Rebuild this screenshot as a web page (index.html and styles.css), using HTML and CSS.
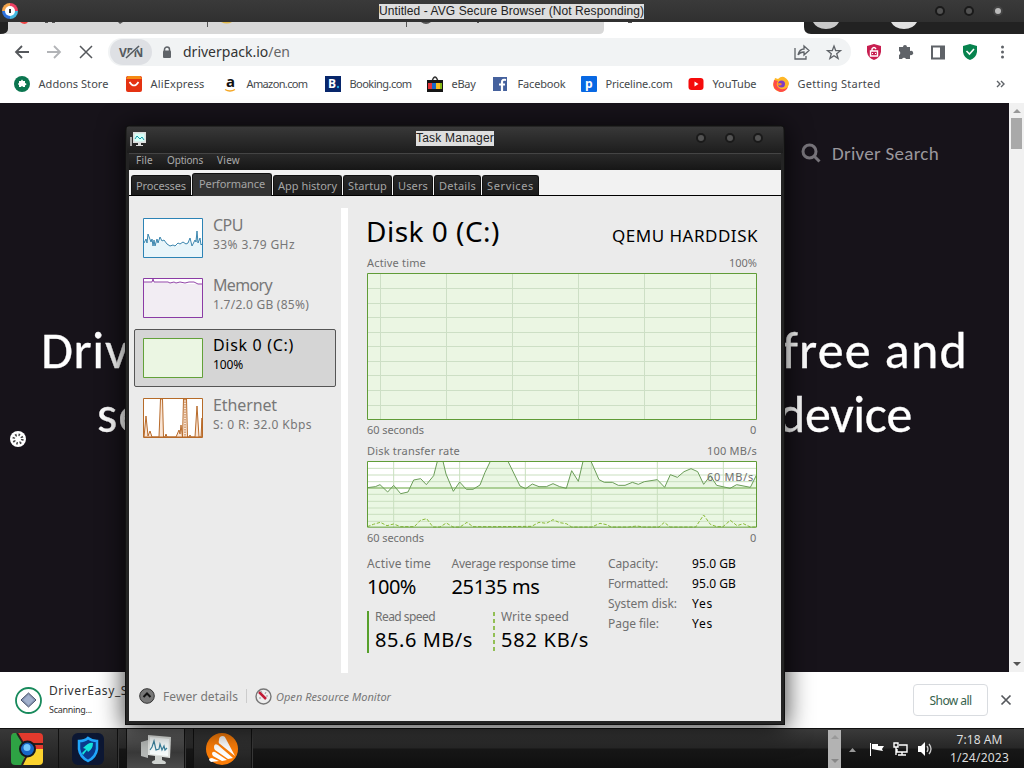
FILE: index.html
```html
<!DOCTYPE html>
<html lang="en">
<head>
<meta charset="utf-8">
<title>Desktop</title>
<link rel="stylesheet" href="styles.css">
</head>
<body>
<div class="desktop">
  <header class="titlebar">
    <svg class="browser-logo" viewBox="0 0 16 16"><path fill="#ef4164" d="M8 0a8 8 0 0 1 8 8H8z"/><path fill="#f5a54b" d="M8 0a8 8 0 0 0-8 8h8z"/><path fill="#2f72dc" d="M0 8a8 8 0 0 0 8 8V8z"/><path fill="#45b8e0" d="M16 8a8 8 0 0 1-8 8V8z"/><circle cx="8" cy="8" r="5" fill="#fff"/><path d="M7 6h2v4H7z" fill="#333"/></svg>
    <span class="caption" data-w="265">Untitled - AVG Secure Browser (Not Responding)</span>
    <div class="knobs wide"><i></i><i></i><i class="lit"></i></div>
  </header>

  <div class="tabstrip">
    <svg width="1024" height="12" viewBox="0 0 1024 12"><path fill="#fff" d="M0 0h1024v12H0z"/><path fill="#d8d8d8" d="M0 0h604v7q0 5-5 5H0z"/><path fill="#222" d="M0 0h8v7q0 5-8 5zM804 0h220v12H811q-7 0-7-7z"/><path fill="#e44" d="M20 0h8q-3 4-8 0z"/><path fill="#e0b94c" d="M221 0h11q-5 3-11 0z"/><path fill="#555" d="M45 0h3v1h-3zM52 0h3v1h-3zM118 0h5l-3 2zM207 0h1v5h-1zM406 0h1v5h-1zM421 0h10q-5 4-10 0zM477 0h2v1h-2zM628 0h4v1h-4z"/><path fill="#c9c9c9" d="M813 0h26a14 11 0 0 1-26 0z"/><path fill="#e1e1e1" d="M891 0h26a14 11 0 0 1-26 0z"/></svg>
  </div>

  <div class="toolbar">
    <svg class="nav" viewBox="0 0 100 34" width="100" height="34" fill="none" stroke-width="1.8"><path stroke="#55585c" d="M29 18H16m6-6-6 6 6 6"/><path stroke="#b2b4b7" d="M47 18h13m-6-6 6 6-6 6"/><path stroke="#55585c" stroke-width="1.5" d="m80 12 12 12m0-12L80 24"/></svg>
    <div class="address">
      <div class="vpn"><span data-w="24">VPN</span><svg viewBox="0 0 20 14" width="20" height="14"><path d="M4 13 16 1" stroke="#dee0e4" stroke-width="3.500"/><path d="M4 13 17 1" stroke="#555a60" stroke-width="1.600"/></svg></div>
      <svg class="lock" width="10" height="13" viewBox="0 0 10 13"><path d="M2.500 5V3.500a2.500 2.500 0 0 1 5 0V5" fill="none" stroke="#5f6368" stroke-width="1.500"/><rect x="1" y="4.500" width="8" height="7.500" rx="1" fill="#5f6368"/></svg>
      <span class="url" data-w="107">driverpack.io<em>/en</em></span>
      <svg class="actions" width="52" height="18" viewBox="0 0 52 18" fill="none" stroke="#5f6368" stroke-width="1.300"><path d="M2 5v11h11v-3M5 12c1-4 3-6 6-6V3l5 4.500-5 4.500V9q-4 0-6 3z"/><path d="m41 3 1.700 4.500 4.800.2-3.800 3 1.400 4.700L41 12.700l-4.100 2.700 1.400-4.700-3.800-3 4.800-.2z"/></svg>
    </div>
    <svg class="extensions" width="152" height="22" viewBox="0 0 152 22"><path fill="#c81e50" d="m14 3 7 2v6q-1 6-7 8-6-2-7-8V5z"/><path d="M10.500 10h7v5h-7zM12 10V8q2-3 4 0" fill="none" stroke="#fff" stroke-width="1.400"/><path d="M12 12.500h1m2 0h1" stroke="#fff"/><path fill="#5f6368" d="M39 6h4a2 2 0 0 1 4-.1V6h3v4a2 2 0 0 1 2 4l-2 .3V18h-4a2.200 2.200 0 0 0-4 0h-3v-4a2.200 2.200 0 0 0 0-4z"/><path fill="none" stroke="#5f6368" stroke-width="2" d="M72 5.500h12v12H72z"/><path fill="#5f6368" d="M80 5h5v13h-5z"/><path fill="#07834e" d="m110 3 7 2v6q-1 6-7 8-6-2-7-8V5z"/><path d="m106.500 10 3 3 4.500-5" fill="none" stroke="#fff" stroke-width="1.600"/><g fill="#5f6368"><circle cx="142.500" cy="6" r="1.500"/><circle cx="142.500" cy="11" r="1.500"/><circle cx="142.500" cy="16" r="1.500"/></g></svg>
  </div>

  <nav class="bookmarks">
    <a><svg viewBox="0 0 16 16"><circle cx="8" cy="8" r="8" fill="#0b7650"/><path fill="#fff" d="M5 5h2q1-3 2 0h2v2q3 1 0 2.500V11H9q-1-2-2 0H5V9Q3 8 5 7z"/></svg><span data-w="70">Addons Store</span></a>
    <a><svg viewBox="0 0 16 16"><rect width="16" height="16" rx="2" fill="#e43212"/><path fill="#f58a13" d="M2 0h12l2 3H0z"/><path d="M3.500 6q4.500 7 9 0" fill="none" stroke="#fff" stroke-width="1.600"/></svg><span data-w="54">AliExpress</span></a>
    <a><svg viewBox="0 0 16 16"><text x="4" y="11" class="amazon">a</text><path d="M3 13.500q5 3 10 0" fill="none" stroke="#f5a623" stroke-width="1.300"/></svg><span data-w="61">Amazon.com</span></a>
    <a><svg viewBox="0 0 16 16"><path fill="#07266b" d="M0 0h16v16H0z"/><text x="3" y="12" class="logo-letter">B</text><circle cx="13" cy="11" r="1.200" fill="#21a8e0"/></svg><span data-w="62">Booking.com</span></a>
    <a><svg viewBox="0 0 16 16"><path d="M5 5q3-8 6 0" fill="none" stroke="#333" stroke-width="1.300"/><path fill="#151515" d="M0 4h16v12H0z"/><path fill="#e53238" d="M1 7h4v6H1z"/><path fill="#1668c8" d="M5 7h4v6H5z"/><path fill="#f5bf20" d="M9 7h4v6H9z"/><path fill="#86b817" d="M13 7h2v6h-2z"/></svg><span data-w="24">eBay</span></a>
    <a><svg viewBox="0 0 16 16"><path fill="#45619d" d="M0 1h14v14H0z"/><path d="M9 15V6q0-3 4-2M6 8.500h6" fill="none" stroke="#fff" stroke-width="2.200"/></svg><span data-w="48">Facebook</span></a>
    <a><svg viewBox="0 0 16 16"><rect width="16" height="16" rx="1" fill="#0868e3"/><text x="4" y="11.500" class="logo-letter">p</text></svg><span data-w="67">Priceline.com</span></a>
    <a><svg viewBox="0 0 16 16"><rect y="2" x=".5" width="15" height="12" rx="3" fill="#f50b0b"/><path fill="#fff" d="m6.500 5.500 4 2.500-4 2.500z"/></svg><span data-w="44">YouTube</span></a>
    <a><svg viewBox="0 0 16 16"><path fill="#ffb727" d="M2 2l3 1q3-3 6-2 5 3 5 7-2 7-8 8-7-1-8-7z"/><path fill="#ff4a48" d="M1 4q-3 9 6 12 6 0 8-5-5 4-9 1-4-3-1-7z"/><circle cx="8.500" cy="8" r="3.500" fill="#803dc4"/><path d="M4 8q3-2 5 0-2 3-5 0" fill="#ff8a24"/></svg><span data-w="83">Getting Started</span></a>
    <svg class="more" viewBox="0 0 10 8" width="10" height="8"><path d="m1 1 3 3-3 3m4-6 3 3-3 3" fill="none" stroke="#5f6368" stroke-width="1.400"/></svg>
  </nav>

  <main class="page">
    <div class="hero">
      <div class="search"><svg width="20" height="20" viewBox="0 0 20 20" fill="none" stroke="#77747a" stroke-width="3"><circle cx="8.500" cy="8.500" r="6.500"/><path d="m13 13 5.500 5.500"/></svg><span data-w="107">Driver Search</span></div>
      <div class="headline"><span data-w="88">Driv</span><span data-w="186">free and</span></div>
      <div class="headline second"><span data-w="48">se</span><span data-w="134">device</span></div>
    </div>
    <div class="scrollbar"><i class="up"></i><b></b><i class="down"></i></div>
    <svg class="busy" width="16" height="16" viewBox="0 0 16 16"><circle cx="8" cy="8" r="8" fill="#fff"/><circle cx="8" cy="8" r="4.300" fill="none" stroke="#444" stroke-width="2.600" stroke-dasharray="1.500 1.877"/></svg>
  </main>

  <footer class="downloads">
    <svg width="27" height="27" viewBox="0 0 27 27"><circle cx="13.500" cy="13.500" r="12.500" fill="#fff" stroke="#188a5c" stroke-width="1.800"/><path d="m13.500 6 7.500 7-7.500 7L6 13z" fill="#8d9bb8" stroke="#46506a"/><path d="m13.500 8 5 5-5 5-5-5z" fill="#a3b1cd"/></svg>
    <div class="file"><span data-w="79">DriverEasy_S</span><small data-w="43">Scanning...</small></div>
    <button class="show-all"><span data-w="42">Show all</span></button>
    <svg class="close" width="12" height="12" viewBox="0 0 12 12"><path d="m1.500 1.500 9 9m0-9-9 9" stroke="#55585c" stroke-width="1.700"/></svg>
  </footer>

  <div class="taskbar">
    <div class="task"><svg width="32" height="32" viewBox="0 0 32 32"><defs><clipPath id="chrome-tile"><rect width="32" height="32" rx="4"/></clipPath></defs><g clip-path="url(#chrome-tile)"><path fill="#e33a2d" d="M0 0h32v16H16z"/><path fill="#2ea344" d="M0 0h6l10 16-5 16H0z"/><path fill="#fbd22e" d="M16 16h16v16H11z"/><path fill="none" stroke="#2b2020" stroke-width="2" d="M6 0l6 10M20 11h12M16 22l-5 10"/></g><circle cx="16.500" cy="16" r="8.500" fill="#15171d"/><circle cx="16.500" cy="16" r="6.500" fill="#1766c6"/><circle cx="16" cy="14.500" r="3.500" fill="#75c8fc"/></svg></div>
    <div class="task shield"><svg width="32" height="32" viewBox="0 0 32 32"><rect width="32" height="32" rx="6" fill="#0c1733"/><path d="M7 8q6 0 9-3 4 3 9 3v8q-1 8-9 12-8-4-9-12z" fill="#0a398d" stroke="#20a6fc" stroke-width="2.500"/><path d="M10 20l4-4-3-1q6-6 10-5 0 6-5 9l-1-2-4 5z" fill="#12e4dc"/></svg></div>
    <div class="task active"><svg width="32" height="32" viewBox="0 0 32 32"><path fill="#b7bab8" d="M1 9l7-2v18l-7-2z"/><path fill="#e1e4e1" d="M8 2l23 2-1 21-22-3z"/><path fill="#f8fdfd" d="M10 4l19 2-1 17-18-2z"/><path d="M10 17l2-3 2-6 2 9 3-1 1-5 2 6 2-4 1 4 2-2" fill="none" stroke="#39809c" stroke-width="1.200"/><path fill="#cfd3d0" d="M15 23h7v4q6 2 3 4H14q-5-2 1-4z"/></svg></div>
    <div class="task last"><svg width="34" height="34" viewBox="0 0 34 34"><circle cx="17" cy="17" r="16" fill="#fb7d08"/><path fill="#fff" d="M14 8q0-4 4-4 2 0 3 3l9 17-15-12q-2-1-1-4zM9 15q0-4 4-2l15 13-5 1L10 18q-1-1-1-3zM7 22q0-3 3-2l12 8-5 1-9-5zM4 28q0-2 3-2l7 3-8 1z"/></svg></div>
    <div class="tray-scroll"><i class="up"></i><i class="down"></i></div>
    <svg class="tray" width="86" height="18" viewBox="0 0 86 18"><path fill="#999" d="m0 12 3.500-4L7 12z"/><path fill="#fff" d="M21 3h1v13h-1zM23 4h6v2h6l-2 3 1 2-6-1-5-1z"/><path fill="none" stroke="#fff" stroke-width="1.400" d="M50 5h8v7H48V9M53 12v3m-4 0h8M45 3h4v4h-4zM47 7v8"/><path fill="#fff" d="M69 6h3l4-4v14l-4-4h-3z"/><path fill="none" stroke="#ccc" stroke-width="1.300" d="M78 6q2 3 0 6M80 4q4 5 0 10"/></svg>
    <div class="clock"><span data-w="46">7:18 AM</span><span data-w="59">1/24/2023</span></div>
  </div>

  <section class="window">
    <header class="window-title">
      <svg width="17" height="16" viewBox="0 0 17 16"><path fill="#ddd" d="M3 0h13v11H3zM8 11h3v2h2v1H6v-1h2z"/><path fill="#d4fff7" d="M4.500 1.500h10v8h-10z"/><path fill="none" stroke="#169bac" d="m5 7 2-3 3 3 2-2 2 3"/><path fill="#aaa" d="M0 5h2v9H0z"/></svg>
      <span class="caption" data-w="78">Task Manager</span>
      <div class="knobs"><i></i><i></i><i></i></div>
    </header>
    <div class="menu"><span data-w="17">File</span><span data-w="36">Options</span><span data-w="23">View</span></div>
    <div class="tabs">
      <span><b data-w="50">Processes</b></span><span class="current"><b data-w="66">Performance</b></span><span><b data-w="59">App history</b></span><span><b data-w="39">Startup</b></span><span><b data-w="30">Users</b></span><span><b data-w="37">Details</b></span><span><b data-w="47">Services</b></span>
    </div>
    <div class="body">
      <aside class="devices">
        <div class="device"><svg viewBox="0 0 60 40"><path d="M0 0h60v40H0z" fill="#fff"/><path d="M1 25L3 21L4 25L5 16L8 24L9 21L10 28L11 22L12 28L14 21L15 25L17 19L19 24L21 22L24 26L30 28L35 27L40 25L45 25L47 21L49 29L52 22L54 13L55 24L57 21L58 27L59 25V39H1z" fill="#e8f5fa"/><path d="M1 25L3 21L4 25L5 16L8 24L9 21L10 28L11 22L12 28L14 21L15 25L17 19L19 23L21 22L24 26L27 28L30 27L32 28L35 25L37 26L40 24L43 26L45 25L47 20L49 28L51 24L52 22L53 24L54 13L55 25L57 20L58 27L59 26" fill="none" stroke="#3b86ae"/><path d="M.5.5h59v39H.5z" fill="none" stroke="#2c83b5"/></svg><div><b data-w="30">CPU</b><span data-w="82">33% 3.79 GHz</span></div></div>
        <div class="device"><svg viewBox="0 0 60 40"><path d="M.5.5h59v39H.5z" fill="#f2edf3" stroke="#8b3ba5"/><path d="M1 1h58v5H45l-14-1L1 4z" fill="#fff"/><path d="M1 4h8l1-3 1 3h14l2 1 4-1 2 1 4-1 5 1 4-1h5l4 2h5" fill="none" stroke="#9245a8"/></svg><div><b data-w="59">Memory</b><span data-w="96">1.7/2.0 GB (85%)</span></div></div>
        <div class="device selected"><svg viewBox="0 0 60 40"><path d="M.5.5h59v39H.5z" fill="#ebf6e3" stroke="#62a139"/></svg><div><b data-w="81">Disk 0 (C:)</b><span data-w="30">100%</span></div></div>
        <div class="device"><svg viewBox="0 0 60 40"><path d="M.5.5h59v39H.5z" fill="#fff" stroke="#b66b29"/><path d="M1 39L3 18L5 38L7 33L9 39H16L17.500 1H19.500L20.500 39H22L23 36L24 39H33L36 32L37 36L38 27L39.500 39L40.500 1H43.500L44.500 39H46L47 37L48 39H52L54 8L56 39H58L59 20V39z" fill="#f9e6d7" stroke="#b86b2b"/><path d="M42 1v38" stroke="#b86b2b" stroke-dasharray="1.500 1"/></svg><div><b data-w="64">Ethernet</b><span data-w="99">S: 0 R: 32.0 Kbps</span></div></div>
      </aside>
      <div class="divider"></div>
      <section class="detail">
        <div class="detail-title"><h1 data-w="134">Disk 0 (C:)</h1><h2 data-w="146">QEMU HARDDISK</h2></div>
        <div class="label-row"><span data-w="59">Active time</span><span data-w="28">100%</span></div>
        <svg class="activity" viewBox="0 0 390 147"><path fill="#ebf6e3" stroke="#609c37" d="M.5.5h389v146H.5z"/><path fill="none" stroke="#cddfc5" d="M13.500 1v145m66-145v145m66-145v145m66-145v145m66-145v145m66-145v145M1 15.500h388M1 30.500h388M1 44.500h388M1 59.500h388M1 73.500h388M1 88.500h388M1 102.500h388M1 117.500h388M1 132.500h388"/></svg>
        <div class="label-row below"><span data-w="57">60 seconds</span><span data-w="7">0</span></div>
        <div class="label-row transfer-label"><span data-w="93">Disk transfer rate</span><span data-w="50">100 MB/s</span></div>
        <div class="transfer">
          <svg viewBox="36 183 1170 201" preserveAspectRatio="none"><path fill="#fff" d="M36 183h1170v201H36z"/><path fill="#eaf7e3" d="M37 263L61 260L75 254L98 276L116 256L137 281L159 276L176 240L197 236L214 254L236 227L247 184H264L273 222L295 274L314 246L334 268H354L375 255L390 217L406 184H459L495 258L512 266L532 252L552 260H574L594 251L614 260L634 265L650 212L670 244L684 184H708L732 239L748 247H772L790 256H810L832 247L850 253L868 245L907 239L929 262L946 224L967 232L987 215L1008 206L1028 215L1046 253L1066 227L1085 256L1125 265L1145 254L1186 262L1204 226V383H37z"/><path class="grid" d="M116 184v199M314 184v199M511 184v199M709 184v199M907 184v199M1105 184v199M37 205h1169M37 225h1169M37 245h1169M37 264h1169M37 283h1169M37 304h1169M37 324h1169M37 343h1169M37 364h1169"/><path class="cap" d="M37 264h1169"/><path class="read" d="M37 263L61 260L75 254L98 276L116 256L137 281L159 276L176 240L197 236L214 254L236 227L247 184M264 184L273 222L295 274L314 246L334 268H354L375 255L390 217L406 184M459 184L495 258L512 266L532 252L552 260H574L594 251L614 260L634 265L650 212L670 244L684 184M708 184L732 239L748 247H772L790 256H810L832 247L850 253L868 245L907 239L929 262L946 224L967 232L987 215L1008 206L1028 215L1046 253L1066 227L1085 256L1125 265L1145 254L1186 262L1204 226"/><path class="write" d="M37 380L55 373L76 367L96 377L116 372L137 380H178L196 361L215 356L234 381H255L274 369L294 381H315L336 367L354 380H420L530 379L552 367L574 370L594 359L614 368L634 371L650 381H710L735 370L755 374L768 381H820L846 378L865 381H912L928 367L945 381H1022L1046 345L1066 373L1085 380H1104L1126 361L1146 377L1165 371L1186 381H1204"/><path fill="none" class="frame" d="M37.500 184.500h1167v197h-1167z"/></svg>
          <span class="cap-label" data-w="47">60 MB/s</span>
        </div>
        <div class="label-row below"><span data-w="57">60 seconds</span><span data-w="7">0</span></div>
        <div class="stats">
          <div class="metrics">
            <div class="metric response"><p data-w="64">Active time</p><strong data-w="49">100%</strong></div>
            <div class="metric"><p data-w="124">Average response time</p><strong data-w="88">25135 ms</strong></div>
            <div class="metric bar"><p data-w="60">Read speed</p><strong data-w="98">85.6 MB/s</strong></div>
            <div class="metric bar dashed"><p data-w="68">Write speed</p><strong data-w="88">582 KB/s</strong></div>
          </div>
          <dl><dt data-w="50">Capacity:</dt><dd data-w="44">95.0 GB</dd><dt data-w="60">Formatted:</dt><dd data-w="44">95.0 GB</dd><dt data-w="69">System disk:</dt><dd data-w="21">Yes</dd><dt data-w="51">Page file:</dt><dd data-w="21">Yes</dd></dl>
        </div>
      </section>
    </div>
    <footer class="window-footer">
      <svg width="16" height="16" viewBox="0 0 16 16"><circle cx="8" cy="8" r="7.300" fill="#777" stroke="#333"/><path d="m4.500 9 3.500-3.500L11.500 9" fill="none" stroke="#111" stroke-width="2"/></svg>
      <span class="fewer" data-w="75">Fewer details</span><i></i>
      <svg width="17" height="17" viewBox="0 0 17 17"><circle cx="8.500" cy="8.500" r="7.500" fill="#eee" stroke="#777" stroke-width="1.400"/><path d="m4 4 7 7" stroke="#c11c36" stroke-width="2.500"/><path d="m6 3 1 2m4-1-1 2m3 2h-2m-7 2h2" stroke="#999"/></svg>
      <em data-w="115">Open Resource Monitor</em>
    </footer>
  </section>
</div>
<script src="fit.js"></script>
</body>
</html>
```

FILE: styles.css
```css
* { box-sizing: border-box; }
body { margin: 0; font-family: "Comic Sans MS", "Noto Sans", sans-serif; color: #444; }
h1, h2, p, dl, dd { margin: 0; font-weight: 400; }
svg { display: block; flex: none; }
[data-w] { white-space: nowrap; letter-spacing: var(--fit, 0); }
.desktop { position: relative; width: 1024px; height: 768px; overflow: hidden; display: flex; flex-direction: column; }

.titlebar { height: 22px; flex: none; display: grid; grid-template-columns: 379px 1fr 95px; align-items: center; background: linear-gradient(#3a3a3a, #303030); }
.browser-logo { width: 16px; height: 16px; margin-left: 2px; }
.caption { justify-self: start; font-family: "Liberation Sans", sans-serif; font-size: 12px; line-height: 15px; color: #222; background: #dedede; }
.knobs { display: flex; gap: 19px; }
.knobs.wide { padding-left: 6px; }
.knobs i { width: 10px; height: 10px; border: 2px solid #1a1a1a; border-radius: 50%; background: #535353; }
.knobs i.lit { background: #bbb; border-color: #444; }
.tabstrip { height: 12px; flex: none; }

.toolbar { height: 34px; flex: none; display: flex; background: #fff; }
.address { width: 743px; height: 28px; margin: 4px 9px 0 8px; border-radius: 14px; background: #f1f3f4; display: flex; align-items: center; }
.vpn { position: relative; width: 42px; height: 26px; margin-left: 2px; border-radius: 13px; background: #dee0e4; display: grid; place-items: center; font: 700 12px "Open Sans", sans-serif; color: #555a60; }
.vpn svg { position: absolute; left: 12px; top: 6px; }
.lock { margin-left: 10px; }
.url { margin-left: 11px; font-size: 14px; line-height: 20px; margin-top: -1px; color: #333; }
.url em { font-style: normal; color: #666; }
.actions { margin-left: auto; margin-right: 6px; }
.extensions { margin-top: 7px; }

.bookmarks { height: 35px; flex: none; display: grid; grid-template-columns: 112px 96px 103px 102px 66px 88px 107px 85px 223px 1fr; align-items: center; padding: 0 0 3px 14px; background: #fff; font-size: 11px; line-height: 16px; color: #45484b; }
.bookmarks a { display: flex; align-items: center; gap: 9px; margin-left: -.5px; }
.bookmarks a > svg { width: 16px; height: 16px; overflow: visible; }
.bookmarks span { margin-top: -1px; }
.amazon { font: 700 15px "Open Sans", sans-serif; fill: #111; }
.logo-letter { font: 700 12px "Open Sans", sans-serif; fill: #fff; }

.page { position: relative; height: 569px; flex: none; display: flex; background: #17131a; }
.hero { width: 1009px; font-family: Calibri, Lato, sans-serif; color: #fff; }
.search { display: flex; align-items: center; gap: 11px; height: 26px; margin: 37px 0 0 801px; font-size: 19px; color: #9b989d; }
.headline { display: flex; justify-content: space-between; height: 64px; margin: 152px 41px 0; font-size: 52px; line-height: 64px; -webkit-text-stroke: .3px #fff; }
.headline.second { margin: 0 97px; }
.scrollbar { width: 15px; background: #f1f1f1; display: flex; flex-direction: column; align-items: center; padding: 6px 0; }
.scrollbar b { width: 11px; height: 31px; margin-top: 5px; background: #a9a9a9; }
.up, .down { border: 4px solid transparent; width: 8px; height: 4px; }
.up { border-top: 0; border-bottom-color: #999; }
.down { border-bottom: 0; border-top-color: #555; margin-top: auto; }
.busy { position: absolute; left: 10px; top: 328px; }

.downloads { height: 56px; flex: none; display: flex; align-items: center; padding: 0 12px 0 15px; background: #fff; }
.file { margin-left: 7px; display: flex; flex-direction: column; font-size: 12px; line-height: 18px; color: #333; }
.file small { font-size: 9px; line-height: 19px; }
.show-all { margin-left: auto; width: 75px; height: 32px; padding: 0; border: 1px solid #d9dce0; border-radius: 4px; background: #fff; font: 12px "Comic Sans MS", "Noto Sans", sans-serif; color: #37634d; }
.close { margin-left: 12px; }

.taskbar { height: 40px; flex: none; display: flex; align-items: center; background: linear-gradient(#3a3a3a, #272727 48%, #171717 52%, #101010); border-top: 1px solid #111; }
.task { width: 59px; height: 39px; flex: none; display: grid; place-items: center; border-right: 1px solid #111; box-shadow: 1px 0 #383838; background: linear-gradient(#383838, #202020); }
.task:first-child { padding-right: 5px; }
.active { margin-left: 8px; background: linear-gradient(#666, #393939 60%, #4b4b4b); border-left: 1px solid #111; }
.last { margin-left: 8px; border-left: 1px solid #111; padding-right: 2px; }
.tray-scroll { margin-left: auto; width: 13px; height: 38px; padding: 5px 3px; display: flex; flex-direction: column; background: #b3b3b3; }
.tray-scroll .down { border-top-color: #888; }
.tray { margin-left: 8px; }
.clock { width: 89px; height: 38px; display: flex; flex-direction: column; align-items: center; font-size: 12px; line-height: 18px; color: #ddd; padding: 1px 0 0; }

.window { position: absolute; left: 126px; top: 126px; width: 658px; height: 598px; border: 3px solid #242424; border-top-width: 1px; border-radius: 4px 4px 0 0; background: #ebebeb; display: flex; flex-direction: column; box-shadow: 0 0 0 1px #111, 0 3px 26px 2px rgba(0, 0, 0, .75); }
.window-title { height: 26px; flex: none; display: grid; grid-template-columns: 287px 1fr 87px; align-items: center; padding-left: 2px; background: linear-gradient(#383838, #1d1d1d); margin: 0 -2px; }
.window-title svg { margin-left: 1px; }
.window-title .caption { margin-top: -3px; }
.window-title .knobs { margin-top: -4px; gap: 18.5px; }
.menu { height: 17px; flex: none; display: flex; gap: 14px; padding-left: 7px; border-top: 1px solid #444; background: linear-gradient(#292929, #161616); font-size: 10px; line-height: 13px; color: #aaa; }
.tabs { height: 26px; flex: none; display: flex; align-items: flex-end; gap: 1px; padding-left: 2px; background: #f2f2f2; border-bottom: 1px solid #000; font-size: 11px; color: #a5a5a5; }
.tabs span { height: 20px; padding: 0 4px; line-height: 19px; border-radius: 3px 3px 0 0; background: linear-gradient(#292929, #1b1b1b); border: 1px solid #111; border-bottom: 0; }
.tabs .current { height: 23px; padding: 0 6px; margin-bottom: -1px; background: #333; line-height: 20px; }
.tabs b { display: block; font-weight: 400; }

.body { height: 477px; display: flex; padding-top: 12px; }
.devices { width: 212px; padding: 1px 5px; display: flex; flex-direction: column; gap: 2px; }
.device { display: flex; width: 202px; height: 58px; padding: 8px; gap: 10px; border: 1px solid transparent; border-radius: 2px; color: #777; }
.device svg { width: 60px; height: 40px; }
.device div { display: flex; flex-direction: column; align-items: flex-start; }
.device b { font-weight: 400; font-size: 16px; line-height: 18px; margin-top: -2px; }
.device span { font-size: 12px; line-height: 22px; }
.device.selected { background: #d5d5d5; border-color: #555; color: #000; }
.divider { width: 7px; background: #fff; }
.detail { width: 390px; margin-left: 19px; color: #707070; }
.detail-title { height: 46px; display: flex; justify-content: space-between; color: #000; }
h1 { font-size: 28px; line-height: 46px; margin-left: -1px; }
h2 { font-size: 17px; line-height: 56px; margin-right: -1px; }
.label-row { height: 19px; display: flex; justify-content: space-between; font-size: 11px; line-height: 17px; }
.activity { width: 390px; height: 147px; }
.below { height: 21px; line-height: 20px; }
.transfer-label { height: 20px; line-height: 19px; }
.transfer { position: relative; height: 67px; }
.transfer svg { width: 390px; height: 67px; }
.cap-label { position: absolute; right: 3px; top: 8px; font-size: 11px; line-height: 16px; }
.grid { fill: none; stroke: #c9dfbf; stroke-width: 3; }
.cap { stroke: #7fb45b; stroke-width: 3; }
.read { fill: none; stroke: #6b9d58; stroke-width: 3; }
.write { fill: none; stroke: #8abb37; stroke-width: 3; stroke-dasharray: 10 5; }
.frame { stroke: #609c37; stroke-width: 3; }
.stats { display: flex; padding-top: 5px; }
.metrics { width: 241px; display: flex; flex-wrap: wrap; align-content: flex-start; }
.metric { width: 156px; height: 53px; font-size: 12px; line-height: 20px; }
.metric.response { width: 84.5px; }
.metric strong { display: block; font-size: 20px; line-height: 26px; font-weight: 400; color: #000; }
.metric.bar { width: 126px; height: 42px; margin-top: 4px; padding-left: 6px; border-left: 2px solid #57a02b; line-height: 12px; }
.metric.bar strong { line-height: 34px; }
.metric.dashed { width: 115px; padding-left: 8px; border-left: 0; background: repeating-linear-gradient(#92bf55 0 4px, transparent 4px 7px) left / 2px 40px no-repeat; }
dl { display: grid; grid-template-columns: 84px 60px; grid-auto-rows: 20px; font-size: 12px; line-height: 20px; }
dd { color: #000; }
.window-footer { height: 46px; display: flex; align-items: center; padding: 0 0 0 10px; font-size: 12px; color: #777; }
.fewer { margin-left: 8px; }
.window-footer i { width: 1px; height: 14px; background: #ccc; margin: 0 8px; }
.window-footer em { margin-left: 4px; font-size: 11px; }
```

FILE: fit.js
```js
// Spread each label across its nominal width, whichever font is available.
document.querySelectorAll('[data-w]').forEach(function (el) {
  var range = document.createRange();
  range.selectNodeContents(el);
  var natural = range.getBoundingClientRect().width;
  var extra = (Number(el.dataset.w) - natural) / el.textContent.length;
  el.style.setProperty('--fit', extra.toFixed(3) + 'px');
});
```
